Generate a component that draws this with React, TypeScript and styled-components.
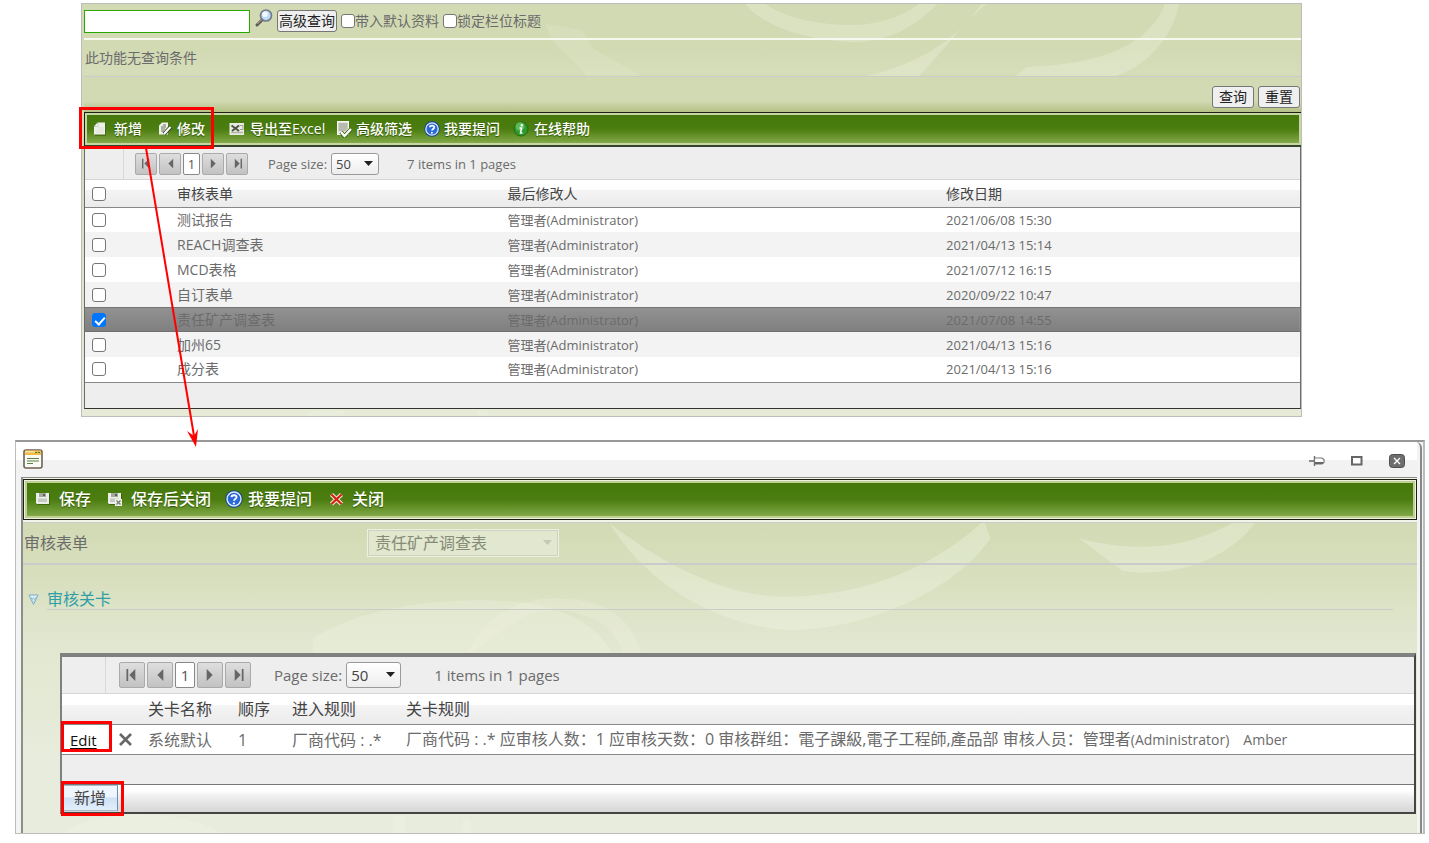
import React from 'react';
import styled, { createGlobalStyle, css } from 'styled-components';

const Global = createGlobalStyle`
  * { box-sizing: border-box; }
  body { margin: 0; background: #fff; }
  button, input, select { font: inherit; margin: 0; }
`;

const Page = styled.div`
  position: relative;
  padding: 3px 4px 9px 15px;
  font-family: "Open Sans", "Noto Sans CJK SC", sans-serif;
  font-size: 14px;
  line-height: 20px;
  color: #6b6b6b;
`;

const ListPanel = styled.section`
  position: relative;
  margin: 0 123px 23px 66px;
  padding: 0 0 7px 2px;
  border: 1px solid #bcbcbc;
  background: linear-gradient(#d2dab4 0, #d2dab4 46px, #d6ddba 70px, #d2dab4 72px, #d2dab4 100px, #e6ead7 400px);
`;

const Swirls = styled.svg`
  position: absolute;
  top: 0;
  left: 0;
  width: 100%;
  height: 100%;
  pointer-events: none;
`;

const Layer = styled.div`
  position: relative;
`;

const SearchRow = styled.form`
  display: flex;
  align-items: center;
  height: 34px;
`;

const SearchInput = styled.input`
  width: 166px;
  height: 23px;
  border: 1px solid #28a800;
  background: #fff;
  outline: 0;
`;

const IconButton = styled.button`
  display: flex;
  align-items: center;
  justify-content: center;
  width: 28px;
  height: 28px;
  padding: 0;
  border: 0;
  background: none;
`;

const SearchButton = styled(IconButton)`
  width: 27px;
  padding-bottom: 6px;
`;

const PlainButton = styled.button<{ $pad?: number }>`
  height: 22px;
  padding: 0 ${(p) => p.$pad ?? 1}px;
  border: 1px solid #767676;
  border-radius: 3px;
  background: #efefef;
  color: #222;
  line-height: 20px;
  white-space: nowrap;
`;

const CheckLabel = styled.label`
  display: flex;
  align-items: center;
  margin-left: 4px;
  white-space: nowrap;
`;

const Check = styled.input.attrs({ type: 'checkbox' })`
  flex: none;
  appearance: none;
  width: 14px;
  height: 14px;
  border: 1px solid #767676;
  border-radius: 3px;
  background: #fff;
  display: block;
  &:checked {
    border-color: #0075ff;
    background: #0075ff;
  }
  &:checked::after {
    content: '';
    display: block;
    width: 4px;
    height: 8px;
    margin: 1px 0 0 4px;
    border: solid #fff;
    border-width: 0 2px 2px 0;
    transform: rotate(42deg);
  }
`;

const ConditionRow = styled.div`
  height: 39px;
  padding: 8px 0 0 1px;
  border-top: 2px solid #f7f8f0;
  border-bottom: 1px solid #cacbcb;
`;

const ActionRow = styled.div`
  display: flex;
  justify-content: flex-end;
  gap: 4px;
  height: 35px;
  padding: 9px 1px 0 0;
  background: linear-gradient(#d2dab4 24px, #b7c287 34px);
`;

const Toolbar = styled.div<{ $big?: boolean }>`
  display: flex;
  align-items: center;
  height: 35px;
  padding-left: 8px;
  border: 1px solid #1c1f14;
  border-right-width: 0;
  border-bottom: 2px solid #34422f;
  background: linear-gradient(#447709, #4b7d10 50%, #76a03c 85%, #8fb356);
  box-shadow: inset 0 0 0 2px #c8d6a2;
  ${(p) =>
    p.$big &&
    css`
      height: 41px;
      padding-left: 11px;
      border: 1px solid #1c1f14;
      font-size: 16px;
      box-shadow: inset 0 0 0 1px #eef2dd, inset 0 0 0 3px #c0cf93;
    `}
`;

const Tool = styled.button<{ $w: number; $gap?: number }>`
  display: flex;
  flex: none;
  align-items: center;
  gap: ${(p) => p.$gap ?? 5}px;
  width: ${(p) => p.$w}px;
  padding: 0;
  border: 0;
  background: none;
  color: #fff;
  font-weight: 500;
  white-space: nowrap;
  text-shadow: 0 1px 1px #2d5200;
`;

const Frame = styled.div<{ $big?: boolean }>`
  border: 1px solid #6b6b6b;
  border-bottom-color: #333;
  border-top: 0;
  background: #eee;
  ${(p) =>
    p.$big &&
    css`
      margin: 43px 1px 0 37px;
      border: 2px solid #808080;
      border-top-width: 4px;
      border-right-color: #444;
      border-bottom-color: #444;
    `}
`;

const Pager = styled.div<{ $big?: boolean }>`
  display: flex;
  align-items: center;
  gap: 2px;
  height: 33px;
  padding-top: 1px;
  font-size: 13px;
  border-bottom: 1px solid #d5d5d5;
  white-space: nowrap;
  ${(p) =>
    p.$big &&
    css`
      height: 37px;
      padding-top: 0;
      font-size: 15px;
    `}
`;

const PagerEdge = styled.div<{ $w: number; $gap: number }>`
  align-self: stretch;
  width: ${(p) => p.$w}px;
  margin-right: ${(p) => p.$gap}px;
  border-right: 1px solid #d8d8d8;
`;

const PageButton = styled.button<{ $current?: boolean; $big?: boolean }>`
  display: flex;
  align-items: center;
  justify-content: center;
  width: ${(p) => (p.$big ? (p.$current ? 20 : 26) : p.$current ? 17 : 22)}px;
  height: ${(p) => (p.$big ? 26 : 22)}px;
  padding: 0;
  border: 1px solid ${(p) => (p.$current ? '#888' : '#aaa')};
  border-radius: 2px;
  background: ${(p) => (p.$current ? '#fff' : 'linear-gradient(#dedede, #c2c2c2)')};
  color: #555;
`;

const SelectWrap = styled.span<{ $w: number; $h: number }>`
  position: relative;
  display: block;
  width: ${(p) => p.$w}px;
  height: ${(p) => p.$h}px;
  select {
    appearance: none;
    width: 100%;
    height: 100%;
    padding: 0 4px;
    border: 1px solid #9a9a9a;
    border-radius: 3px;
    background: linear-gradient(#fff, #ededed);
    color: #444;
  }
  svg {
    position: absolute;
    top: 0;
    bottom: 0;
    right: 5px;
    margin: auto 0;
    pointer-events: none;
  }
`;

const SizeLabel = styled.label<{ $gap: number; $after: number }>`
  display: flex;
  align-items: center;
  gap: 4px;
  margin: 0 ${(p) => p.$after}px 0 ${(p) => p.$gap}px;
`;

const Table = styled.table<{ $big?: boolean }>`
  width: 100%;
  table-layout: fixed;
  border-collapse: collapse;
  background: #fff;
  th, td {
    height: 25px;
    padding: 0;
    text-align: left;
    font-weight: 400;
    white-space: nowrap;
  }
  thead tr {
    background: linear-gradient(#fff 35%, #f4f4f4 36%, #ebebeb);
    color: #444;
  }
  thead th {
    height: 27px;
    padding-top: 2px;
    border-bottom: 1px solid #888;
  }
  tbody { border-bottom: 1px solid #888; }
  ${(p) =>
    p.$big &&
    css`
      font-size: 16px;
      thead th { height: 31px; padding-top: 0; }
      td { height: 30px; }
    `}
`;

const Row = styled.tr<{ $selected?: boolean }>`
  &:nth-child(even) { background: #f3f3f3; }
  ${(p) =>
    p.$selected &&
    css`
      background: linear-gradient(#929292, #7f7f7f);
      box-shadow: inset 0 1px #777, inset 0 -1px #707070;
    `}
`;

const CheckCell = styled.td`
  input { margin-left: 7px; }
`;

const SmallCell = styled.td`
  font-size: 13px;
`;

const UserNames = styled.span`
  font-size: 14px;
`;

const GridFoot = styled.div<{ $h: number }>`
  height: ${(p) => p.$h}px;
`;

const AddBar = styled.div`
  height: 28px;
  border-top: 1px solid #777;
  background: linear-gradient(#fff 20%, #eee 45%, #d6d6d6);
`;

const AddButton = styled.button`
  width: 56px;
  height: 26px;
  padding: 0;
  border: 1px solid #a9b9cc;
  border-right-color: #6f8db1;
  background: linear-gradient(#eef5fc 45%, #cfe1f4 50%, #e2eefa);
  color: #444;
  font-size: 16px;
  line-height: 24px;
`;

const Dialog = styled.section`
  border: 1px solid #bdbdbd;
  border-top: 2px solid #989898;
  border-right: 2px solid #bcbcbc;
  background: #f3f3f3;
  padding: 0 1px 0 5px;
`;

const DialogInner = styled.div`
  border-right: 2px solid #888;
  border-top-right-radius: 6px;
  padding-right: 3px;
`;

const TitleBar = styled.header`
  display: flex;
  align-items: center;
  height: 35px;
  margin-left: -5px;
  padding: 0 6px 0 7px;
  background: linear-gradient(#fff 50%, #f2f2f2 51%);
`;

const TitleActions = styled.div`
  display: flex;
  gap: 12px;
  margin-left: auto;
  padding-top: 4px;
`;

const DialogBody = styled.div`
  position: relative;
  border-left: 2px solid #8a8f8a;
  border-top: 1px solid #8a8f8a;
  padding: 1px 0 19px;
  background: linear-gradient(#f2f4e8 44px, #d2dab4 45px, #d8dfbe 100px, #e1e7cf 160px, #e8ecdc 280px);
`;

const FieldRow = styled.div`
  display: flex;
  align-items: center;
  height: 43px;
  margin-top: 2px;
  border-top: 1px solid #cacbcb;
  border-bottom: 2px solid #cacbcb;
  padding-left: 1px;
  font-size: 16px;
  > label { width: 344px; }
`;

const FormSelect = styled(SelectWrap)`
  select {
    padding: 0 6px;
    border-color: #ccd2bd;
    border-radius: 0;
    outline: 1px solid #eef1e2;
    background: #e2e7cf;
    color: #858b75;
    opacity: 1;
  }
`;

const SectionTitle = styled.h2`
  display: flex;
  align-items: center;
  gap: 8px;
  height: 44px;
  margin: 0 24px 0 5px;
  padding-top: 25px;
  font-size: 16px;
  font-weight: 400;
  color: #2f9ea6;
`;

const SectionRule = styled.hr`
  height: 1px;
  margin: 0 24px 0 24px;
  border: 0;
  background: #cacbcb;
`;

const EditLink = styled.a`
  margin-left: 8px;
  font-size: 15px;
  color: #111;
  text-underline-offset: 2px;
`;

const Mark = styled.div<{ $x: number; $y: number; $w: number; $h: number }>`
  position: absolute;
  left: ${(p) => p.$x}px;
  top: ${(p) => p.$y}px;
  width: ${(p) => p.$w}px;
  height: ${(p) => p.$h}px;
  border: 3px solid #f00;
  pointer-events: none;
`;

const Arrow = styled.svg`
  position: absolute;
  left: 140px;
  top: 148px;
  pointer-events: none;
`;

const Magnifier = () => (
  <svg width="20" height="20" viewBox="0 0 20 20">
    <path d="M8 12 3 17" stroke="#5c5650" strokeWidth="3" strokeLinecap="round" />
    <path d="M8 11.500 3 16.200" stroke="#b5aca2" strokeWidth="1" />
    <circle cx="12" cy="7.500" r="5.500" fill="#bcdcfa" stroke="#747a86" strokeWidth="1.700" />
    <circle cx="11" cy="6.300" r="2.800" fill="#fff" opacity=".8" />
  </svg>
);

const NewIcon = () => (
  <svg width="16" height="16" viewBox="0 0 16 16">
    <path d="M5 2h8v13H2V6z" fill="#315607" opacity=".5" />
    <path d="M5 1.500h7v12H1v-8z" fill="#eef0ea" />
    <path d="M5 1.500v4H1z" fill="#fff" stroke="#aab09e" strokeWidth=".6" />
    <path d="M5 7h6M4 9h7M3 11h8" stroke="#dfe2d8" />
  </svg>
);

const EditIcon = () => (
  <svg width="14" height="16" viewBox="0 0 14 16">
    <path d="M4 1.500h6v12H1v-9z" fill="#eef0ea" />
    <path d="M5 4h3M3 6h5M3 8h4M3 10h3" stroke="#67705a" />
    <path d="M6 13 12.500 6" stroke="#2c3a1c" strokeWidth="4" />
    <path d="M6 13 12.500 6" stroke="#fff" strokeWidth="2.200" />
  </svg>
);

const ExcelIcon = () => (
  <svg width="16" height="16" viewBox="0 0 16 16">
    <rect x=".5" y="2" width="14.500" height="12" fill="#e9ece4" />
    <path d="M2 11.500h12" stroke="#aeb5a2" strokeWidth="1.500" />
    <path d="M2.500 4.500 10 10M10 4.500 3 10" stroke="#4c5640" strokeWidth="2" />
    <path d="M10.500 4.500H14v4h-3" fill="none" stroke="#9ba28f" />
  </svg>
);

const FilterIcon = () => (
  <svg width="16" height="18" viewBox="0 0 16 18">
    <rect x="1.500" y="1.500" width="11" height="13" fill="#e3e6de" stroke="#f7f8f4" />
    <path d="M2.500 4h9M2.500 6h9M2.500 8h9M2.500 10h8" stroke="#8a937e" />
    <path d="m5 12 3.500 4 6.500-7" fill="none" stroke="#345a0a" strokeWidth="4" />
    <path d="m5 12 3.500 4 6.500-7" fill="none" stroke="#fff" strokeWidth="2.400" />
  </svg>
);

const HelpIcon = ({ size = 16 }: { size?: number }) => (
  <svg width={size} height={size} viewBox="0 0 16 16">
    <circle cx="8" cy="8" r="7.700" fill="#123f95" />
    <circle cx="8" cy="8" r="6.200" fill="#2a6ad8" stroke="#dcebfc" strokeWidth="1.300" />
    <path d="M5.800 6.300C6 4 10.500 4 10.200 6.600 10 8 8 8 8 9.600" fill="none" stroke="#fff" strokeWidth="1.700" />
    <circle cx="7.900" cy="11.800" r="1" fill="#fff" />
  </svg>
);

const InfoIcon = () => (
  <svg width="16" height="16" viewBox="0 0 16 16">
    <circle cx="8" cy="8" r="7" fill="#2f9a2c" stroke="#1f6c10" />
    <circle cx="7" cy="5.500" r="4.500" fill="#8ad583" opacity=".5" />
    <circle cx="8.800" cy="4.300" r="1.200" fill="#fff" />
    <path d="M6.500 7h2L7.500 12h2" fill="none" stroke="#fff" strokeWidth="1.500" />
  </svg>
);

const SaveIcon = ({ close = false }: { close?: boolean }) => (
  <svg width="16" height="16" viewBox="0 0 16 16">
    <path d="M2 3h13v11H2z" fill="#2d5103" opacity=".6" />
    <path d="M1 2h13v11H2l-1-1z" fill="#eceee9" />
    <path d="M4 2h7v4H4z" fill="#a4aa9c" />
    <path d="M8 3h2v2H8z" fill="#596150" />
    <path d="M3 7.500h9V11H3z" fill="#c6cac0" />
    {close && <path d="M8 8h7v7H8z" fill="#eef0ea" />}
    {close && <path d="m9.500 9.500 4 4m0-4-4 4" stroke="#7a836f" strokeWidth="1.400" />}
  </svg>
);

const CloseIcon = () => (
  <svg width="15" height="15" viewBox="0 0 15 15">
    <path d="m2.500 2.500 10 9.500m0-9.500-10 9.500" stroke="#f7e5d8" strokeWidth="4.400" />
    <path d="m2.500 2.500 10 9.500m0-9.500-10 9.500" stroke="#d4200c" strokeWidth="2.200" />
  </svg>
);

const WindowIcon = () => (
  <svg width="20" height="20" viewBox="0 0 20 20">
    <rect x="1" y="1" width="18" height="18" rx="2" fill="#fbfbf6" stroke="#6d6256" strokeWidth="1.600" />
    <path d="M2 1.500h16V6H2z" fill="#f2bd45" />
    <path d="M2 2h10v1.500H2z" fill="#fbe19a" />
    <path d="M12 3.500h2m1 0h2" stroke="#4c7e29" strokeWidth="1.200" />
    <path d="M4 9.500h12M4 12h12M4 14.500h6" stroke="#5b8040" strokeWidth="1.200" />
  </svg>
);

const Pin = () => (
  <svg width="18" height="16" viewBox="0 0 18 16">
    <path d="M1 8h5M6.500 3v10" stroke="#666" strokeWidth="1.300" />
    <path d="M6.500 5H14l2 1.500v3L14 11H6.500z" fill="#fff" stroke="#777" strokeWidth="1.200" />
    <path d="M7 10h8" stroke="#666" strokeWidth="2" />
  </svg>
);

const Maximize = () => (
  <svg width="18" height="16" viewBox="0 0 18 16">
    <rect x="4" y="4" width="9.500" height="7.500" fill="#fff" stroke="#666" strokeWidth="2" />
  </svg>
);

const CloseBox = () => (
  <svg width="18" height="16" viewBox="0 0 18 16">
    <rect x="1.500" y="1.500" width="15" height="13" rx="3" fill="#6e6e6e" stroke="#4f4f4f" />
    <path d="m6 5 6 6m0-6-6 6" stroke="#fff" strokeWidth="1.300" />
  </svg>
);

const Gem = () => (
  <svg width="11" height="13" viewBox="0 0 11 13">
    <path d="M1 2h9L5.500 11.500z" fill="#e2f1f8" stroke="#76acc9" />
    <path d="M3 4.500h5L5.500 9z" fill="#69a5c6" />
    <path d="m4.500 4 1 4 1-4" fill="none" stroke="#fff" strokeWidth=".8" />
  </svg>
);

const CrossSvg = styled.svg`
  display: block;
`;

const Cross = () => (
  <CrossSvg width="15" height="15" viewBox="0 0 15 15">
    <path d="m2 2 11 11M13 2 2 13" stroke="#666" strokeWidth="2.600" />
  </CrossSvg>
);

const ArrowHead = ({ flip = false, bar = false, big = false }: { flip?: boolean; bar?: boolean; big?: boolean }) => (
  <svg width={big ? 16 : 13} height={big ? 16 : 13} viewBox="0 0 12 12">
    <g transform={flip ? 'matrix(-1 0 0 1 12 0)' : undefined}>
      <path d="M3.500 1.500 8 6 3.500 10.500z" fill="#666" />
      {bar && <path d="M9.500 1.500v9" stroke="#666" strokeWidth="1.300" />}
    </g>
  </svg>
);

const Caret = ({ color = '#222' }: { color?: string }) => (
  <svg width="10" height="6" viewBox="0 0 10 6">
    <path d="M0 0h9L4.500 5z" fill={color} />
  </svg>
);

const GridPager = ({ big = false, id, text }: { big?: boolean; id: string; text: string }) => (
  <Pager $big={big}>
    <PagerEdge $w={big ? 44 : 39} $gap={big ? 11 : 9} />
    <PageButton $big={big} aria-label="First page"><ArrowHead big={big} flip bar /></PageButton>
    <PageButton $big={big} aria-label="Previous page"><ArrowHead big={big} flip /></PageButton>
    <PageButton $big={big} $current>1</PageButton>
    <PageButton $big={big} aria-label="Next page"><ArrowHead big={big} /></PageButton>
    <PageButton $big={big} aria-label="Last page"><ArrowHead big={big} bar /></PageButton>
    <SizeLabel htmlFor={id} $gap={big ? 21 : 18} $after={big ? 31 : 26}>
      Page size:
      <SelectWrap $w={big ? 55 : 48} $h={big ? 26 : 22}>
        <select id={id} defaultValue="50"><option>50</option></select>
        <Caret />
      </SelectWrap>
    </SizeLabel>
    <span>{text}</span>
  </Pager>
);

const forms = [
  ['测试报告', '2021/06/08 15:30'],
  ['REACH调查表', '2021/04/13 15:14'],
  ['MCD表格', '2021/07/12 16:15'],
  ['自订表单', '2020/09/22 10:47'],
  ['责任矿产调查表', '2021/07/08 14:55'],
  ['加州65', '2021/04/13 15:16'],
  ['成分表', '2021/04/13 15:16'],
];

export default function App() {
  return (
    <Page>
      <Global />
      <ListPanel>
        <Swirls viewBox="0 0 1220 412" preserveAspectRatio="none" fill="#f2f5e4" fillOpacity=".3">
          <path d="M664 0C680 22 730 38 775 38 815 36 835 20 856 0H838C815 16 790 22 765 21 730 20 700 12 684 0Z" />
          <path d="M900 0C880 30 845 58 785 72H838C860 50 880 20 905 0Z" />
          <path d="M1084 0C1070 36 1030 60 945 63L935 72H1035C1070 60 1092 30 1098 0Z" />
          <path d="M464 20 500 26 512 45 560 72H505C490 50 470 45 464 20Z" fillOpacity=".15" />
          <path d="M232 407h34l-8 5h-34zM395 407h12v5h-12z" />
        </Swirls>
        <Layer>
          <SearchRow onSubmit={(e) => e.preventDefault()}>
            <SearchInput aria-label="搜索" />
            <SearchButton type="button" aria-label="搜索"><Magnifier /></SearchButton>
            <PlainButton type="button">高级查询</PlainButton>
            <CheckLabel><Check />带入默认资料</CheckLabel>
            <CheckLabel><Check />锁定栏位标题</CheckLabel>
          </SearchRow>
          <ConditionRow>此功能无查询条件</ConditionRow>
          <ActionRow>
            <PlainButton type="button" $pad={6}>查询</PlainButton>
            <PlainButton type="button" $pad={6}>重置</PlainButton>
          </ActionRow>
          <Toolbar>
            <Tool $w={65}><NewIcon />新增</Tool>
            <Tool $w={71}><EditIcon />修改</Tool>
            <Tool $w={107}><ExcelIcon />导出至Excel</Tool>
            <Tool $w={88} $gap={4}><FilterIcon />高级筛选</Tool>
            <Tool $w={89} $gap={4}><HelpIcon />我要提问</Tool>
            <Tool $w={88}><InfoIcon />在线帮助</Tool>
          </Toolbar>
          <Frame>
            <GridPager id="list-size" text="7 items in 1 pages" />
            <Table>
              <colgroup>
                <col style={{ width: 92 }} />
                <col style={{ width: '27.2%' }} />
                <col style={{ width: '36.1%' }} />
                <col />
              </colgroup>
              <thead>
                <tr>
                  <CheckCell as="th"><Check aria-label="全选" /></CheckCell>
                  <th>审核表单</th>
                  <th>最后修改人</th>
                  <th>修改日期</th>
                </tr>
              </thead>
              <tbody>
                {forms.map(([name, date], i) => (
                  <Row key={name} $selected={i === 4}>
                    <CheckCell><Check aria-label={name} defaultChecked={i === 4} /></CheckCell>
                    <td>{name}</td>
                    <SmallCell>管理者(Administrator)</SmallCell>
                    <SmallCell>{date}</SmallCell>
                  </Row>
                ))}
              </tbody>
            </Table>
            <GridFoot $h={25} />
          </Frame>
        </Layer>
      </ListPanel>

      <Dialog>
        <DialogInner>
          <TitleBar>
            <WindowIcon />
            <TitleActions>
              <IconButton aria-label="固定"><Pin /></IconButton>
              <IconButton aria-label="最大化"><Maximize /></IconButton>
              <IconButton aria-label="关闭窗口"><CloseBox /></IconButton>
            </TitleActions>
          </TitleBar>
          <DialogBody>
            <Swirls viewBox="0 0 1395 353" preserveAspectRatio="none" fill="#f2f5e4" fillOpacity=".35">
              <path d="M587 45C640 85 700 117 760 118 840 118 910 90 962 42L968 60C930 115 840 150 770 151 690 148 620 100 587 45Z" />
              <path d="M1057 60C1090 68 1150 80 1215 42H1235C1200 90 1140 98 1100 92Z" />
              <path d="M290 160C340 125 440 115 510 125 560 135 580 155 590 175H290Z" fillOpacity=".3" />
              <path d="M445 175C470 120 520 115 560 122 600 130 610 150 620 175H600C590 130 520 120 490 145Z" fillOpacity=".25" />
              <path d="M40 353C70 330 150 325 200 353Z" />
              <path d="M370 336h12v17h-12zM440 340h8v13h-8z" />
            </Swirls>
            <Layer>
              <Toolbar $big>
                <Tool $gap={8} $w={72}><SaveIcon />保存</Tool>
                <Tool $gap={8} $w={118}><SaveIcon close />保存后关闭</Tool>
                <Tool $gap={5} $w={104}><HelpIcon size={18} />我要提问</Tool>
                <Tool $gap={8} $w={60}><CloseIcon />关闭</Tool>
              </Toolbar>
              <FieldRow>
                <label htmlFor="form-name">审核表单</label>
                <FormSelect $w={190} $h={26}>
                  <select id="form-name" disabled><option>责任矿产调查表</option></select>
                  <Caret color="#c3cab5" />
                </FormSelect>
              </FieldRow>
              <SectionTitle><Gem />审核关卡</SectionTitle>
              <SectionRule />
              <Frame $big>
                <GridPager big id="stage-size" text="1 items in 1 pages" />
                <Table $big>
                  <colgroup>
                    <col style={{ width: 56 }} />
                    <col style={{ width: 30 }} />
                    <col style={{ width: 90 }} />
                    <col style={{ width: 54 }} />
                    <col style={{ width: 114 }} />
                    <col />
                  </colgroup>
                  <thead>
                    <tr>
                      <th aria-label="编辑" />
                      <th aria-label="删除" />
                      <th>关卡名称</th>
                      <th>顺序</th>
                      <th>进入规则</th>
                      <th>关卡规则</th>
                    </tr>
                  </thead>
                  <tbody>
                    <tr>
                      <td><EditLink href="#edit">Edit</EditLink></td>
                      <td><Cross /></td>
                      <td>系统默认</td>
                      <td>1</td>
                      <td>厂商代码 : .*</td>
                      <td>
                        厂商代码 : .* 应审核人数：1 应审核天数：0 审核群组：電子課級,電子工程師,產品部 审核人员：管理者
                        <UserNames>(Administrator)　Amber</UserNames>
                      </td>
                    </tr>
                  </tbody>
                </Table>
                <GridFoot $h={29} />
                <AddBar><AddButton>新增</AddButton></AddBar>
              </Frame>
            </Layer>
          </DialogBody>
        </DialogInner>
      </Dialog>

      <Mark $x={79} $y={107} $w={135} $h={42} />
      <Mark $x={61} $y={721} $w={51} $h={31} />
      <Mark $x={61} $y={781} $w={63} $h={35} />
      <Arrow width="64" height="300" viewBox="0 0 64 300">
        <path d="M6 0 54 288" stroke="#f00" strokeWidth="2" />
        <path d="M47 283l7 5 4-7-2 18z" fill="#f00" />
      </Arrow>
    </Page>
  );
}
